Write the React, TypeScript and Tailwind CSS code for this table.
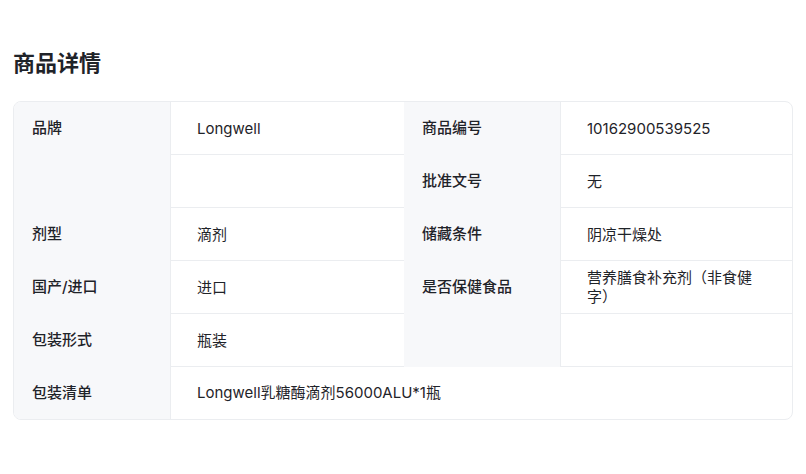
const rows: Array<[string, string, string, string]> = [
  ["品牌", "Longwell", "商品编号", "10162900539525"],
  ["", "", "批准文号", "无"],
  ["剂型", "滴剂", "储藏条件", "阴凉干燥处"],
  ["国产/进口", "进口", "是否保健食品", "营养膳食补充剂（非食健字）"],
  ["包装形式", "瓶装", "", ""],
];

function Label({ text }: { text: string }) {
  return (
    <div className="h-[53px] flex items-center pl-[18px] pr-3 bg-[#f7f8fa] border-r border-[#ebedf0] font-medium text-[#1f2329]">
      {text}
    </div>
  );
}

function Value({ text }: { text: string }) {
  return (
    <div className="h-[53px] flex items-center pl-[26px] pr-[27px] border-b border-[#ebedf0] text-[#1f2329] leading-[19px]">
      {text}
    </div>
  );
}

export default function App() {
  return (
    <div
      className="min-h-screen bg-white px-[13px] pt-12"
      style={{ fontFamily: 'Inter, "Noto Sans CJK SC", sans-serif' }}
    >
      <h1 className="text-[22px] leading-[30px] font-semibold text-[#1f2329] mb-[23px]">
        商品详情
      </h1>

      <div className="w-[780px] border border-[#ebedf0] rounded-lg overflow-hidden text-[15px]">
        <div className="grid grid-cols-[157px_233px_157px_1fr]">
          {rows.map(([l1, v1, l2, v2], i) => (
            <div key={i} className="contents">
              <Label text={l1} />
              <Value text={v1} />
              <Label text={l2} />
              <Value text={v2} />
            </div>
          ))}
          <div className="h-[52px] flex items-center pl-[18px] bg-[#f7f8fa] border-r border-[#ebedf0] font-medium text-[#1f2329]">
            包装清单
          </div>
          <div className="col-span-3 h-[52px] flex items-center pl-[26px] text-[#1f2329]">
            Longwell乳糖酶滴剂56000ALU*1瓶
          </div>
        </div>
      </div>
    </div>
  );
}
